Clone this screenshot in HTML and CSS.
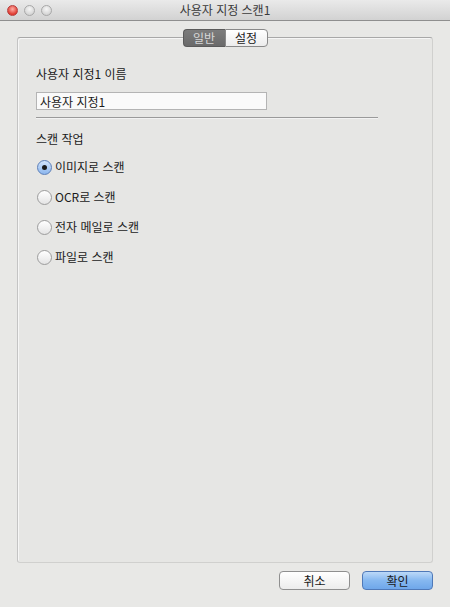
FILE: index.html
```html
<!DOCTYPE html>
<html lang="ko">
<head>
  <meta charset="UTF-8">
  <title>사용자 지정 스캔1</title>
  <link rel="stylesheet" href="styles.css">
</head>
<body>

  <div class="창">
    <div class="제목줄">
      <div class="신호등">
        <span class="버튼원 닫기"></span>
        <span class="버튼원"></span>
        <span class="버튼원"></span>
      </div>
      <div class="제목">사용자 지정 스캔1</div>
    </div>

    <div class="본문">
      <div class="탭줄">
        <div class="탭 선택됨">일반</div>
        <div class="탭">설정</div>
      </div>

      <div class="패널">
        <div class="라벨">사용자 지정1 이름</div>
        <input class="입력칸" type="text" value="사용자 지정1">
        <div class="구분선"></div>

        <div class="라벨 작업">스캔 작업</div>
        <div class="라디오목록">
          <label class="라디오"><span class="원 켜짐"></span>이미지로 스캔</label>
          <label class="라디오"><span class="원"></span>OCR로 스캔</label>
          <label class="라디오"><span class="원"></span>전자 메일로 스캔</label>
          <label class="라디오"><span class="원"></span>파일로 스캔</label>
        </div>
      </div>

      <div class="버튼줄">
        <button class="단추">취소</button>
        <button class="단추 기본">확인</button>
      </div>
    </div>
  </div>

</body>
</html>
```

FILE: styles.css
```css
body {
  margin: 0;
  font-family: "Noto Sans CJK KR", "DejaVu Sans", sans-serif;
  font-size: 12px;
  color: #1a1a1a;
  background-color: #e8e8e6;
}
.창 {
  width: 450px;
  height: 607px;
  display: flex;
  flex-direction: column;
}
.제목줄 {
  height: 20px;
  border-bottom: 1px solid #8f8f8f;
  background: linear-gradient(#eaeaea, #d2d2d2);
  display: flex;
  align-items: center;
  position: relative;
}
.신호등 {
  display: flex;
  gap: 6px;
  padding-left: 7px;
}
.버튼원 {
  width: 11px;
  height: 11px;
  border-radius: 50%;
  border: 1px solid #a8a8a8;
  background: radial-gradient(circle at 50% 35%, #f6f6f6, #c8c8c8);
  box-sizing: border-box;
}
.버튼원.닫기 {
  border-color: #b54040;
  background: radial-gradient(circle at 50% 35%, #ffb0a8, #e03a30 70%);
}
.제목 {
  position: absolute;
  left: 0;
  right: 0;
  text-align: center;
  color: #3a3a3a;
  font-size: 12px;
  line-height: 20px;
}
.본문 {
  flex: 1;
  padding: 8px 17px 0 17px;
  display: flex;
  flex-direction: column;
}
.탭줄 {
  display: flex;
  justify-content: center;
  position: relative;
  z-index: 1;
  margin-bottom: -10px;
}
.탭 {
  width: 42px;
  height: 18px;
  box-sizing: border-box;
  line-height: 16px;
  text-align: center;
  font-size: 12px;
  border: 1px solid #8a8a8a;
  background: linear-gradient(#ffffff, #ececec);
  color: #222;
}
.탭:first-child {
  border-radius: 4px 0 0 4px;
  border-right: none;
}
.탭:last-child {
  width: 43px;
  border-radius: 0 4px 4px 0;
}
.탭.선택됨 {
  background: linear-gradient(#7c7c7c, #6a6a6a);
  border-color: #5a5a5a;
  color: #d8d8d8;
}
.패널 {
  height: 526px;
  box-sizing: border-box;
  border: 1px solid #d0d0ce;
  border-top-color: #a8a8a8;
  border-left-color: #c4c4c4;
  border-radius: 3px;
  box-shadow: inset 1px 1px 0 #f6f6f6;
  background-color: #e6e6e4;
  padding: 28px 0 0 18px;
  display: flex;
  flex-direction: column;
  align-items: flex-start;
}
.라벨 {
  line-height: 16px;
}
.입력칸 {
  margin-top: 10px;
  width: 231px;
  height: 18px;
  box-sizing: border-box;
  border: 1px solid #b4b4b4;
  background-color: #fafafa;
  font-family: inherit;
  font-size: 12px;
  padding: 0 3px;
  color: #1a1a1a;
  outline: none;
}
.구분선 {
  margin-top: 7px;
  width: 342px;
  height: 1px;
  background-color: #9a9a9a;
  border-bottom: 1px solid #f2f2f2;
}
.라벨.작업 {
  margin-top: 12px;
}
.라디오목록 {
  margin-top: 12px;
  display: flex;
  flex-direction: column;
  gap: 14px;
}
.라디오 {
  display: flex;
  align-items: center;
  gap: 3px;
  height: 16px;
  line-height: 16px;
}
.원 {
  width: 15px;
  height: 15px;
  box-sizing: border-box;
  border-radius: 50%;
  border: 1px solid #9c9c9c;
  background: linear-gradient(#ffffff, #e4e4e4);
  display: flex;
  align-items: center;
  justify-content: center;
  margin-left: 1px;
}
.원.켜짐 {
  border-color: #5c7fb8;
  background: linear-gradient(#d2e4fb, #8cb6ee);
}
.원.켜짐::after {
  content: "";
  width: 5px;
  height: 5px;
  border-radius: 50%;
  background-color: #1a1a1a;
}
.버튼줄 {
  display: flex;
  justify-content: flex-end;
  gap: 12px;
  padding-top: 8px;
}
.단추 {
  width: 71px;
  height: 19px;
  box-sizing: border-box;
  border: 1px solid #8f8f8f;
  border-radius: 4px;
  background: linear-gradient(#ffffff, #ececec);
  font-family: inherit;
  font-size: 12px;
  line-height: 16px;
  padding: 0;
  color: #1a1a1a;
}
.단추.기본 {
  border-color: #4f79b8;
  background: linear-gradient(#bcd9f8, #86b8f0 50%, #6fa7ea);
}
```
